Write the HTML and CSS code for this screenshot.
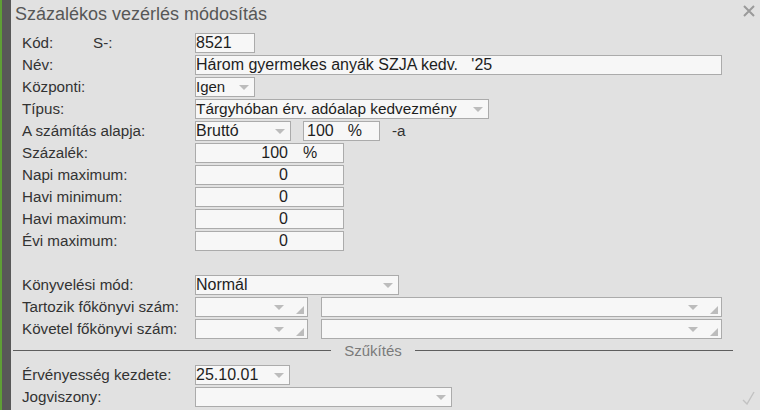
FILE: index.html
```html
<!DOCTYPE html>
<html lang="hu">
<head>
<meta charset="utf-8">
<title>Százalékos vezérlés módosítás</title>
<link rel="stylesheet" href="styles.css">
</head>
<body>
<div class="frame">
  <div class="stripe"></div>
  <div class="dialog">
    <div class="titlebar">
      <h1 class="title">Százalékos vezérlés módosítás</h1>
      <svg class="close" width="12" height="12" viewBox="0 0 12 12"><path d="M1 1 L11 11 M11 1 L1 11" stroke="#9a9a9a" stroke-width="2" fill="none"/></svg>
    </div>
    <div class="form">
      <div class="row"><div class="lbl"><span class="kod">Kód:</span><span>S-:</span></div><div class="box w-kod">8521</div></div>
      <div class="row"><div class="lbl">Név:</div><div class="box w-nev pre">Három gyermekes anyák SZJA kedv.   '25</div></div>
      <div class="row"><div class="lbl">Központi:</div><div class="box w-kod sel-small">Igen<span class="arrow"></span></div></div>
      <div class="row"><div class="lbl">Típus:</div><div class="box w-tipus">Tárgyhóban érv. adóalap kedvezmény<span class="arrow"></span></div></div>
      <div class="row"><div class="lbl">A számítás alapja:</div><div class="box w-brutto">Bruttó<span class="arrow"></span></div><div class="box w-pct"><span>100</span><span class="pct-unit">%</span></div><span class="suffix">-a</span></div>
      <div class="row"><div class="lbl">Százalék:</div><div class="box w-num"><span class="val">100</span><span class="unit">%</span></div></div>
      <div class="row"><div class="lbl">Napi maximum:</div><div class="box w-num"><span class="val">0</span><span class="unit"></span></div></div>
      <div class="row"><div class="lbl">Havi minimum:</div><div class="box w-num"><span class="val">0</span><span class="unit"></span></div></div>
      <div class="row"><div class="lbl">Havi maximum:</div><div class="box w-num"><span class="val">0</span><span class="unit"></span></div></div>
      <div class="row"><div class="lbl">Évi maximum:</div><div class="box w-num"><span class="val">0</span><span class="unit"></span></div></div>
      <div class="spacer"></div>
      <div class="row"><div class="lbl">Könyvelési mód:</div><div class="box w-konyv">Normál<span class="arrow"></span></div></div>
      <div class="row"><div class="lbl">Tartozik főkönyvi szám:</div><div class="box w-fk1"><span class="arrow"></span><span class="corner"></span></div><div class="box w-fk2"><span class="arrow"></span><span class="corner"></span></div></div>
      <div class="row"><div class="lbl">Követel főkönyvi szám:</div><div class="box w-fk1"><span class="arrow"></span><span class="corner"></span></div><div class="box w-fk2"><span class="arrow"></span><span class="corner"></span></div></div>
      <div class="divider"><span class="line"></span><span class="divtext">Szűkítés</span><span class="line"></span></div>
      <div class="row"><div class="lbl">Érvényesség kezdete:</div><div class="box w-erv">25.10.01<span class="arrow"></span></div></div>
      <div class="row"><div class="lbl">Jogviszony:</div><div class="box w-jog"><span class="arrow"></span></div></div>
    </div>
    <svg class="check" width="13" height="14" viewBox="0 0 13 14"><path d="M1 9 L5 13 L12 1" stroke="#c2c2c2" stroke-width="1.4" fill="none"/></svg>
  </div>
</div>
</body>
</html>
```

FILE: styles.css
```css
* { box-sizing: border-box; }
html, body {
  margin: 0;
  padding: 0;
}
body {
  width: 760px;
  height: 410px;
  overflow: hidden;
  background: #e1e1e1;
  font-family: "Liberation Sans", Arial, sans-serif;
  font-size: 15px;
  color: #333333;
}
.frame {
  display: flex;
  height: 410px;
  border-left: 2px solid #5f9f36;
}
.stripe {
  width: 9px;
  flex-shrink: 0;
  background: #585858;
}
.dialog {
  position: relative;
  flex: 1;
  min-width: 0;
}
.titlebar {
  display: flex;
  justify-content: space-between;
  align-items: flex-start;
  padding: 4px 5px 0 4px;
}
.title {
  margin: 0;
  font-size: 18px;
  line-height: 20px;
  font-weight: normal;
  color: #575757;
}
.close {
  margin-top: 1px;
}
.form {
  margin-top: 9px;
  padding-left: 11px;
}
.row {
  display: flex;
  align-items: center;
  height: 20px;
  margin-bottom: 2px;
  line-height: 20px;
}
.lbl {
  width: 173px;
  flex-shrink: 0;
  font-size: 15.2px;
  color: #333333;
  white-space: nowrap;
}
.kod {
  display: inline-block;
  width: 71px;
}
.box {
  display: flex;
  align-items: center;
  height: 20px;
  border: 1px solid #ababab;
  background: #f7f7f7;
  color: #1e1e1e;
  font-size: 16px;
  line-height: 18px;
  padding: 0;
  white-space: nowrap;
  overflow: hidden;
  flex-shrink: 0;
}
.pre { white-space: pre; }
.sel-small { font-size: 15px; }
.arrow {
  width: 0;
  height: 0;
  margin-left: auto;
  margin-right: 5px;
  border-left: 5px solid transparent;
  border-right: 5px solid transparent;
  border-top: 5px solid #bcbcbc;
}
.corner {
  width: 0;
  height: 0;
  margin-right: 3px;
  margin-left: 7px;
  margin-top: 6px;
  border-left: 8px solid transparent;
  border-bottom: 8px solid #bcbcbc;
}
.w-kod { width: 60px; }
.w-nev { width: 527px; }
.w-tipus { width: 294px; font-size: 15.4px; }
.w-brutto { width: 96px; }
.w-pct { width: 77px; margin-left: 12px; padding-left: 3px; }
.pct-unit { margin-left: 14px; }
.suffix { margin-left: 12px; font-size: 15.2px; }
.w-num { width: 149px; }
.val {
  flex: 1;
  text-align: right;
}
.unit {
  width: 55px;
  padding-left: 15px;
}
.w-konyv { width: 204px; }
.w-fk1 { width: 113px; }
.w-fk2 { width: 401px; margin-left: 13px; }
.w-erv { width: 95px; }
.w-jog { width: 257px; }
.spacer { height: 22px; }
.divider {
  display: flex;
  align-items: center;
  height: 19px;
  margin: 0 27px 5px -9px;
}
.line {
  flex: 1;
  height: 1px;
  background: #5e5e5e;
}
.divtext {
  padding: 0 13px;
  color: #7a7a7a;
  line-height: 18px;
}
.check {
  position: absolute;
  right: 5px;
  bottom: 5px;
}
```
